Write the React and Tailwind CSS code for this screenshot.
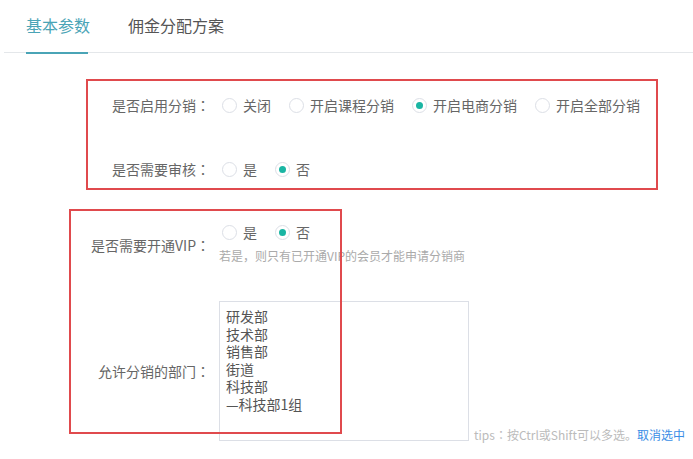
import React from "react";

function Radio({ checked, label }) {
  return (
    <label className="flex items-center mr-[18px] cursor-pointer">
      <span className="w-[15px] h-[15px] rounded-full border border-[#dcdfe6] bg-white flex items-center justify-center">
        {checked && <span className="w-[7px] h-[7px] rounded-full bg-[#1ab5a3]" />}
      </span>
      <span className="ml-[6px] text-[14px] text-[#666]">{label}</span>
    </label>
  );
}

function Colon() {
  return <span style={{ fontFamily: '"Noto Sans CJK TC", sans-serif' }}>：</span>;
}

export default function App() {
  const font = { fontFamily: '"Noto Sans CJK SC", "Noto Sans", sans-serif' };
  return (
    <div className="relative w-[693px] h-[459px] bg-white overflow-hidden" style={font}>
      {/* tabs */}
      <div className="ml-[4px] border-b border-[#e4e7ea] h-[53px] flex items-start">
        <div className="ml-[22px] relative h-[53px] flex items-start pt-[13px]">
          <span className="text-[16px] leading-[24px] text-[#4aa4b6]">基本参数</span>
          <span className="absolute left-0 right-[2px] bottom-[-1px] h-[2px] bg-[#4aa4b6]" />
        </div>
        <div className="ml-[38px] pt-[13px]">
          <span className="text-[16px] leading-[24px] text-[#555]">佣金分配方案</span>
        </div>
      </div>

      {/* form */}
      <div className="pt-[36px]">
        <div className="flex items-center h-[32px]">
          <div className="w-[212px] text-right pr-[2px] text-[14px] text-[#666]">是否启用分销<Colon /></div>
          <div className="flex items-center ml-[10px]">
            <Radio label="关闭" />
            <Radio label="开启课程分销" />
            <Radio checked label="开启电商分销" />
            <Radio label="开启全部分销" />
          </div>
        </div>

        <div className="flex items-center h-[32px] mt-[32px]">
          <div className="w-[212px] text-right pr-[2px] text-[14px] text-[#666]">是否需要审核<Colon /></div>
          <div className="flex items-center ml-[10px]">
            <Radio label="是" />
            <Radio checked label="否" />
          </div>
        </div>

        <div className="flex items-center mt-[37px]">
          <div className="w-[212px] text-right pr-[2px] text-[14px] text-[#666] pt-[4px]">是否需要开通VIP<Colon /></div>
          <div className="flex flex-col ml-[7px]">
            <div className="flex items-center h-[20px] ml-[3px]">
              <Radio label="是" />
              <Radio checked label="否" />
            </div>
            <div className="text-[12px] leading-[18px] text-[#aaa] mt-[5px]">若是，则只有已开通VIP的会员才能申请分销商</div>
          </div>
        </div>

        <div className="flex items-center mt-[36px]">
          <div className="w-[212px] text-right pr-[2px] text-[14px] text-[#666]">允许分销的部门<Colon /></div>
          <div className="flex items-end ml-[7px]">
            <div className="w-[250px] h-[140px] border border-[#dcdfe6] pl-[6px] pt-[6px] text-[14px] leading-[17.5px] text-[#555]">
              <div>研发部</div>
              <div>技术部</div>
              <div>销售部</div>
              <div>街道</div>
              <div>科技部</div>
              <div>
                <span style={{ fontFamily: '"Noto Sans CJK TC", sans-serif' }}>—</span>科技部1组
              </div>
            </div>
            <div className="ml-[5px] text-[12px] leading-[16px] text-[#bbb] mb-[-2px] whitespace-nowrap">
              tips<Colon />按Ctrl或Shift可以多选。<span className="text-[#3a8ee6]">取消选中</span>
            </div>
          </div>
        </div>
      </div>

      {/* annotation boxes */}
      <div className="absolute left-[86px] top-[79px] w-[572px] h-[111px] border-2 border-[#e04a4d] pointer-events-none" />
      <div className="absolute left-[69px] top-[209px] w-[273px] h-[225px] border-2 border-[#e04a4d] pointer-events-none" />
    </div>
  );
}
